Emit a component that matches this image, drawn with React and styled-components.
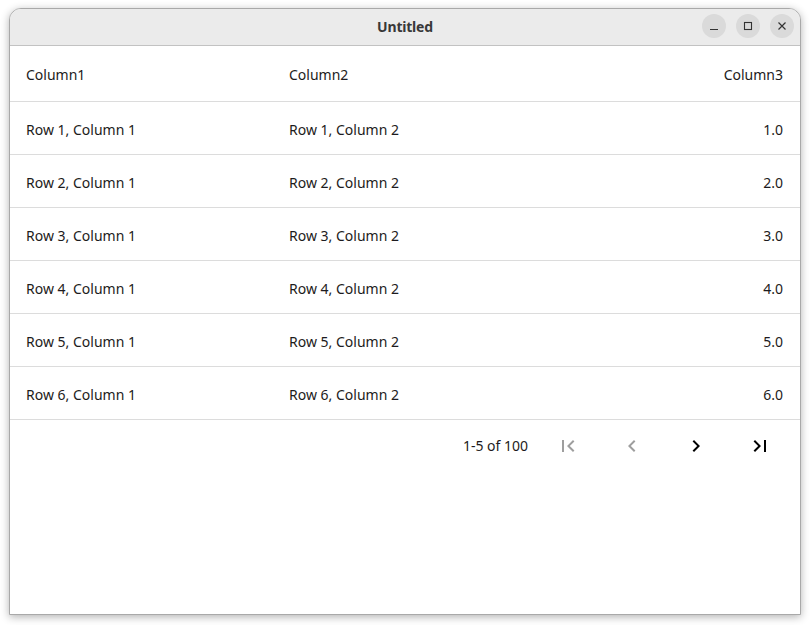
import React from "react";
import styled, { createGlobalStyle } from "styled-components";

const GlobalStyle = createGlobalStyle`
  html, body {
    margin: 0;
    padding: 0;
    background: #ffffff;
  }
  body {
    font-family: "Noto Sans", "Open Sans", sans-serif;
  }
`;

const Page = styled.div`
  width: 810px;
  height: 625px;
  box-sizing: border-box;
  padding: 8px 9px 10px 9px;
  display: flex;
`;

const Window = styled.div`
  flex: 1;
  display: flex;
  flex-direction: column;
  background: #ffffff;
  border: 1px solid #a9a9a9;
  border-radius: 12px 12px 0 0;
  box-shadow: 0 2px 9px rgba(0, 0, 0, 0.3);
  overflow: hidden;
`;

const TitleBar = styled.div`
  height: 37px;
  box-sizing: border-box;
  padding-bottom: 2px;
  flex: none;
  display: flex;
  align-items: center;
  justify-content: center;
  position: relative;
  background: #ebebeb;
  border-bottom: 1px solid #c2c2c2;
`;

const Title = styled.div`
  font-family: "Noto Sans", "DejaVu Sans", sans-serif;
  font-weight: 700;
  font-size: 14px;
  letter-spacing: -0.2px;
  color: #383838;
`;

const Controls = styled.div`
  position: absolute;
  right: 6px;
  top: 0;
  bottom: 2px;
  display: flex;
  align-items: center;
  gap: 10px;
`;

const CtlButton = styled.div`
  width: 24px;
  height: 24px;
  border-radius: 50%;
  background: #dadada;
  display: flex;
  align-items: center;
  justify-content: center;
`;

const Row = styled.div`
  display: grid;
  grid-template-columns: 263px 1fr auto;
  align-items: center;
  box-sizing: border-box;
  height: ${(p) => (p.$head ? 56 : 53)}px;
  padding: 2px 17px 0 16px;
  border-bottom: 1px solid #dcdcdc;
  font-size: 14px;
  color: #1d1b20;
`;

const NumCell = styled.div`
  text-align: right;
`;

const Footer = styled.div`
  height: 53px;
  box-sizing: border-box;
  padding: 0 16px 2px 0;
  display: flex;
  align-items: center;
  justify-content: flex-end;
  gap: 16px;
  font-size: 14px;
  color: #1d1b20;
`;

const PageButton = styled.div`
  width: 48px;
  height: 48px;
  display: flex;
  align-items: center;
  justify-content: center;
  color: ${(p) => (p.$disabled ? "#9e9e9e" : "#000000")};
`;

const Icon = ({ d }) => (
  <svg width="24" height="24" viewBox="0 0 24 24" fill="currentColor">
    <path d={d} />
  </svg>
);

const rows = [1, 2, 3, 4, 5, 6];

export default function App() {
  return (
    <>
      <GlobalStyle />
      <Page>
        <Window>
          <TitleBar>
            <Title>Untitled</Title>
            <Controls>
              <CtlButton>
                <svg width="10" height="10" viewBox="0 0 10 10">
                  <path d="M1 8.5h8" stroke="#333" strokeWidth="1.2" />
                </svg>
              </CtlButton>
              <CtlButton>
                <svg width="10" height="10" viewBox="0 0 10 10">
                  <rect x="1.5" y="1.5" width="7" height="7" fill="none" stroke="#333" strokeWidth="1.1" />
                </svg>
              </CtlButton>
              <CtlButton>
                <svg width="10" height="10" viewBox="0 0 10 10">
                  <path d="M1.5 1.5l7 7M8.5 1.5l-7 7" stroke="#333" strokeWidth="1.2" />
                </svg>
              </CtlButton>
            </Controls>
          </TitleBar>
          <Row $head>
            <div>Column1</div>
            <div>Column2</div>
            <NumCell>Column3</NumCell>
          </Row>
          {rows.map((n) => (
            <Row key={n}>
              <div>Row {n}, Column 1</div>
              <div>Row {n}, Column 2</div>
              <NumCell>{n}.0</NumCell>
            </Row>
          ))}
          <Footer>
            <span>1-5 of 100</span>
            <PageButton $disabled>
              <Icon d="M18.41 16.59L13.82 12l4.59-4.59L17 6l-6 6 6 6zM6 6h2v12H6z" />
            </PageButton>
            <PageButton $disabled>
              <Icon d="M15.41 7.41L14 6l-6 6 6 6 1.41-1.41L10.83 12z" />
            </PageButton>
            <PageButton>
              <Icon d="M10 6L8.59 7.41 13.17 12l-4.58 4.59L10 18l6-6z" />
            </PageButton>
            <PageButton>
              <Icon d="M5.59 7.41L10.18 12l-4.59 4.59L7 18l6-6-6-6zM16 6h2v12h-2z" />
            </PageButton>
          </Footer>
        </Window>
      </Page>
    </>
  );
}
